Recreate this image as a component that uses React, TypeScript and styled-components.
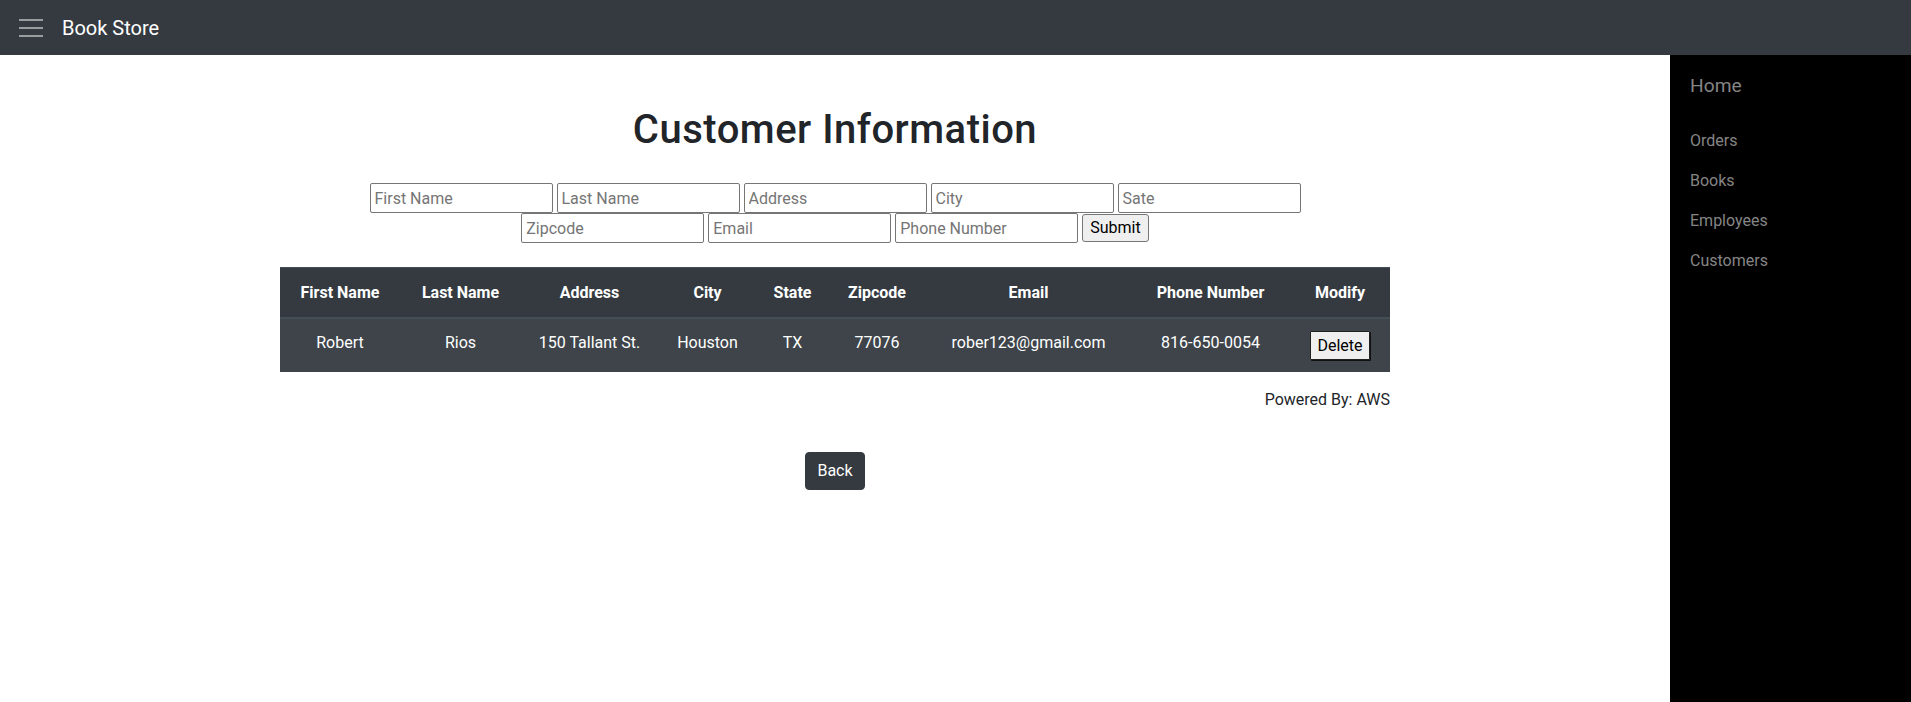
import React from 'react';
import styled, { createGlobalStyle } from 'styled-components';

const GlobalStyle = createGlobalStyle`
  *, *::before, *::after { box-sizing: border-box; }
  html, body { margin: 0; padding: 0; }
  body {
    font-family: Roboto, "Liberation Sans", Arial, sans-serif;
    font-size: 16px;
    line-height: 1.5;
    color: #212529;
    background: #fff;
  }
`;

const NavBar = styled.header`
  height: 55px;
  background: #343a40;
  display: flex;
  align-items: center;
  padding-left: 19px;
`;

const Toggler = styled.span`
  display: flex;
  width: 24px;
  height: 20px;
  margin-right: 19px;
`;

const Brand = styled.span`
  font-size: 20px;
  line-height: 30px;
  color: #fff;
`;

const Layout = styled.div`
  display: flex;
  min-height: calc(100vh - 55px);
`;

const Main = styled.main`
  flex: 1;
  padding-top: 51px;
`;

const Container = styled.div`
  width: 1110px;
  margin: 0 auto;
  display: flex;
  flex-direction: column;
  align-items: center;
`;

const Title = styled.h1`
  margin: 0 0 29px;
  font-size: 40px;
  font-weight: 500;
  line-height: 48px;
  letter-spacing: 0.5px;
  color: #212529;
`;

const Form = styled.form`
  width: 100%;
  display: flex;
  flex-wrap: wrap;
  justify-content: center;
  align-items: center;
  column-gap: 4px;
`;

const Field = styled.input`
  width: 183px;
  height: 30px;
  padding: 2px 4px;
  border: 1px solid #767676;
  border-radius: 2px;
  font-family: inherit;
  font-size: 16px;
  line-height: 24px;
  color: #000;
  background: #fff;
  &::placeholder { color: #757575; }
`;

const SubmitButton = styled.button`
  height: 28px;
  padding: 0 7px;
  border: 1px solid #767676;
  border-radius: 3px;
  background: #efefef;
  font-family: inherit;
  font-size: 16px;
  line-height: 24px;
  color: #000;
`;

const Table = styled.table`
  width: 1110px;
  margin-top: 24px;
  border-collapse: collapse;
  table-layout: fixed;
  color: #fff;
  background: #343a40;
`;

const Col = styled.col<{ $w: number }>`
  width: ${p => p.$w}px;
`;

const HeadCell = styled.th`
  padding: 13px 4px 12px;
  font-weight: 700;
  line-height: 24px;
  text-align: center;
  border-top: 1px solid #454d55;
  border-bottom: 2px solid #454d55;
  white-space: nowrap;
`;

const BodyRow = styled.tr`
  background: #3e444a;
`;

const Cell = styled.td`
  padding: 12px 4px;
  line-height: 24px;
  text-align: center;
  vertical-align: top;
  white-space: nowrap;
`;

const DeleteButton = styled.button`
  height: 29px;
  padding: 0 6px;
  border: 1px solid #222;
  box-shadow: 1px 1px 0 #111;
  border-radius: 1px;
  background: #efefef;
  font-family: inherit;
  font-size: 16px;
  line-height: 24px;
  color: #000;
`;

const Powered = styled.div`
  align-self: flex-end;
  margin-top: 16px;
  line-height: 24px;
`;

const BackButton = styled.button`
  margin-top: 40px;
  height: 38px;
  padding: 6px 11px;
  border: 1px solid #343a40;
  border-radius: 4px;
  background: #343a40;
  color: #fff;
  font-family: inherit;
  font-size: 16px;
  line-height: 24px;
`;

const Sidebar = styled.aside`
  width: 241px;
  flex-shrink: 0;
  background: #000;
  padding: 17px 0 0 20px;
`;

const HomeLink = styled.div`
  font-size: 19.2px;
  line-height: 28.8px;
  color: #858585;
`;

const NavList = styled.nav`
  margin-top: 20px;
  display: flex;
  flex-direction: column;
`;

const NavItem = styled.div`
  padding: 8px 0;
  font-size: 16px;
  line-height: 24px;
  color: #858585;
`;

const columns = [
  { label: 'First Name', w: 120 },
  { label: 'Last Name', w: 121 },
  { label: 'Address', w: 137 },
  { label: 'City', w: 99 },
  { label: 'State', w: 71 },
  { label: 'Zipcode', w: 98 },
  { label: 'Email', w: 205 },
  { label: 'Phone Number', w: 159 },
  { label: 'Modify', w: 100 },
];

const row = ['Robert', 'Rios', '150 Tallant St.', 'Houston', 'TX', '77076', 'rober123@gmail.com', '816-650-0054'];

const placeholders = ['First Name', 'Last Name', 'Address', 'City', 'Sate', 'Zipcode', 'Email', 'Phone Number'];

export default function App() {
  return (
    <>
      <GlobalStyle />
      <NavBar>
        <Toggler>
          <svg width="24" height="20" viewBox="0 0 24 20">
            <path d="M0 2h24M0 10h24M0 18h24" stroke="rgba(255,255,255,0.5)" strokeWidth="2" />
          </svg>
        </Toggler>
        <Brand>Book Store</Brand>
      </NavBar>
      <Layout>
        <Main>
          <Container>
            <Title>Customer Information</Title>
            <Form onSubmit={e => e.preventDefault()}>
              {placeholders.map(p => (
                <Field key={p} placeholder={p} />
              ))}
              <SubmitButton type="submit">Submit</SubmitButton>
            </Form>
            <Table>
              <colgroup>
                {columns.map(c => (
                  <Col key={c.label} $w={c.w} />
                ))}
              </colgroup>
              <thead>
                <tr>
                  {columns.map(c => (
                    <HeadCell key={c.label}>{c.label}</HeadCell>
                  ))}
                </tr>
              </thead>
              <tbody>
                <BodyRow>
                  {row.map((v, i) => (
                    <Cell key={i}>{v}</Cell>
                  ))}
                  <Cell>
                    <DeleteButton>Delete</DeleteButton>
                  </Cell>
                </BodyRow>
              </tbody>
            </Table>
            <Powered>Powered By: AWS</Powered>
            <BackButton>Back</BackButton>
          </Container>
        </Main>
        <Sidebar>
          <HomeLink>Home</HomeLink>
          <NavList>
            <NavItem>Orders</NavItem>
            <NavItem>Books</NavItem>
            <NavItem>Employees</NavItem>
            <NavItem>Customers</NavItem>
          </NavList>
        </Sidebar>
      </Layout>
    </>
  );
}
